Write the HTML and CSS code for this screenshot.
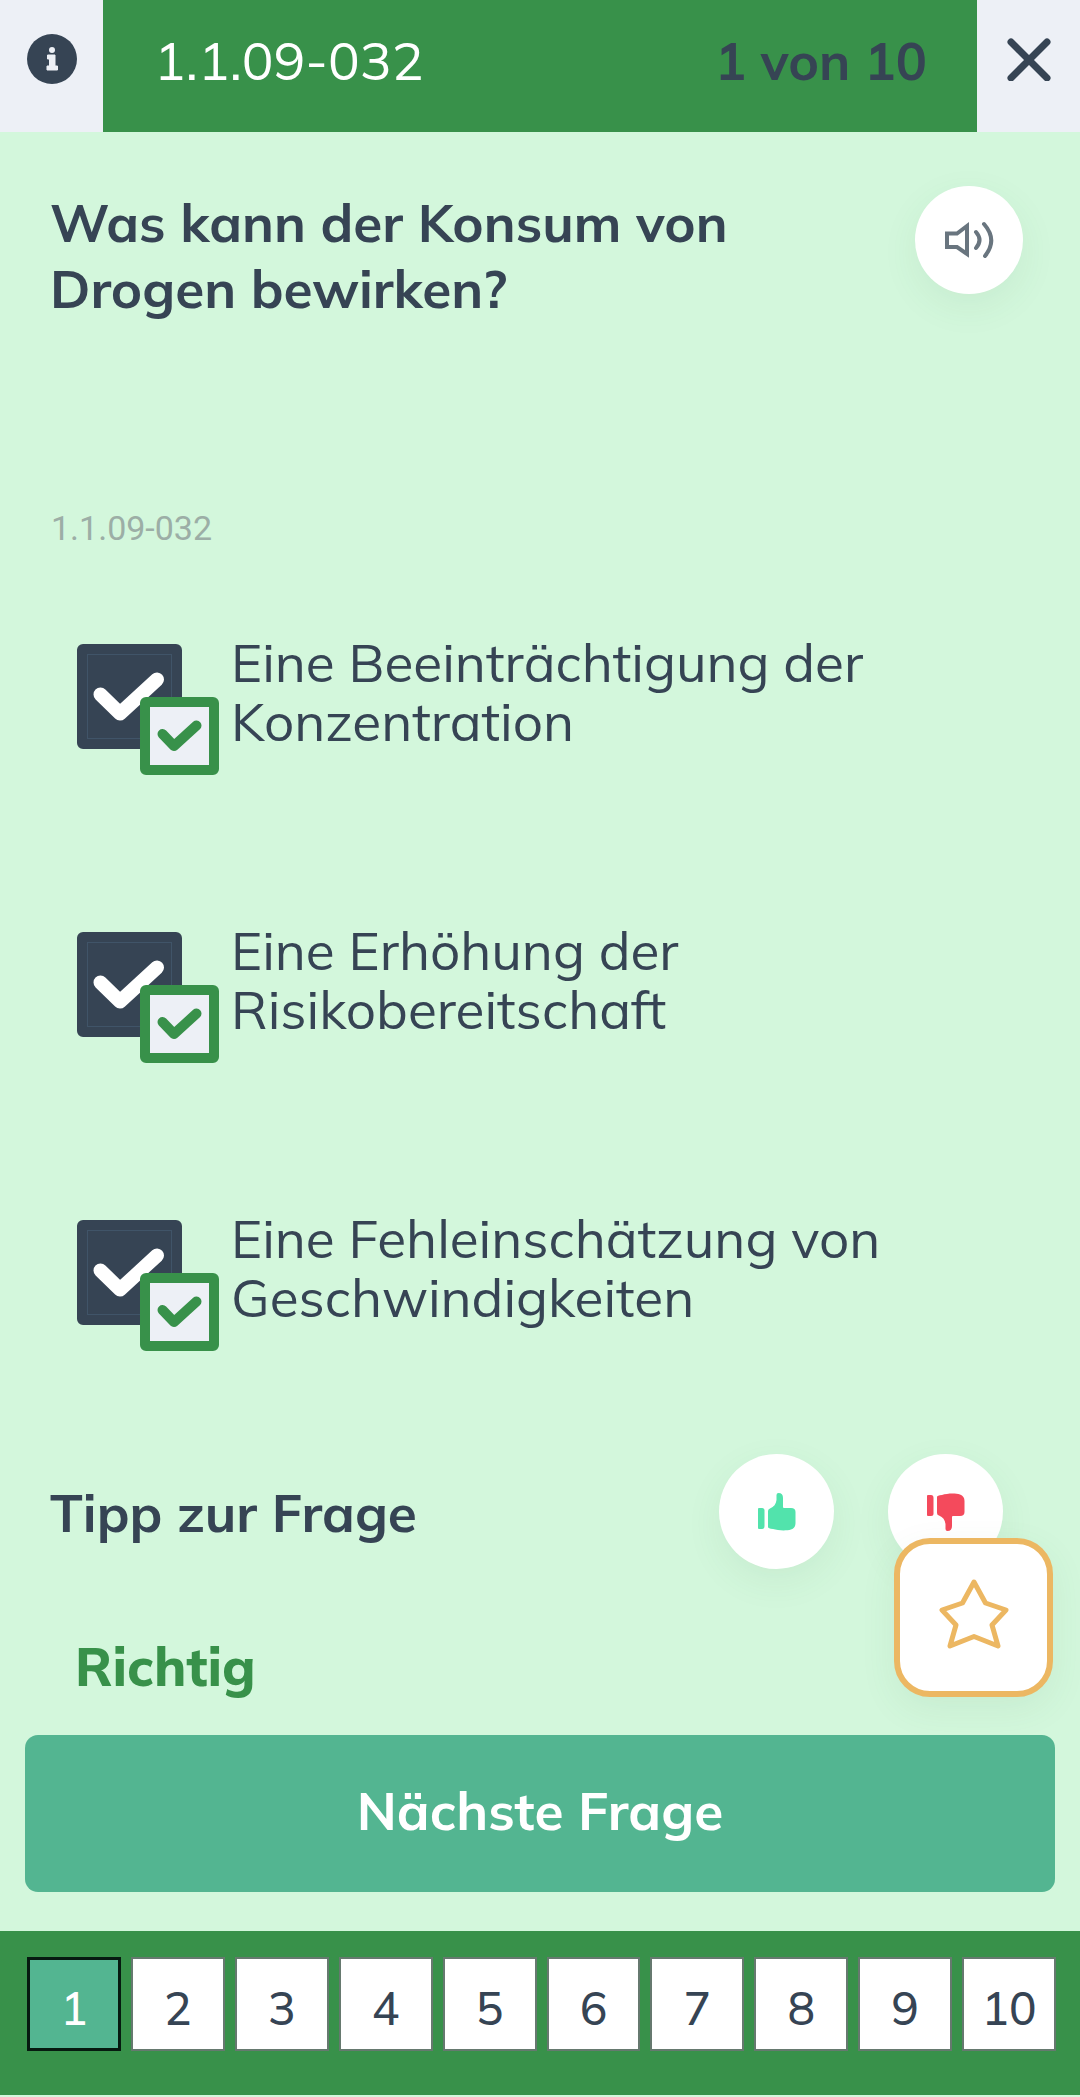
FILE: index.html
```html
<!DOCTYPE html>
<html lang="de">
<head>
<meta charset="utf-8">
<meta name="viewport" content="width=device-width, initial-scale=1">
<title>Frage 1.1.09-032</title>
<link rel="stylesheet" href="styles.css">
</head>
<body>
<svg class="sprite" aria-hidden="true">
  <symbol id="check" viewBox="0 0 72 50"><path d="M7.500 22.500 L27 41.500 L64 7.500" fill="none" stroke="currentColor" stroke-width="14" stroke-linecap="round" stroke-linejoin="round"/></symbol>
  <symbol id="check-bold" viewBox="0 0 45 32"><path d="M5.500 14 L17 26 L39.500 5.500" fill="none" stroke="currentColor" stroke-width="10" stroke-linecap="round" stroke-linejoin="round"/></symbol>
  <symbol id="thumb" viewBox="0 0 40 40">
    <path d="M2 16 H5 Q7.500 16 7.500 18.500 V34 Q7.500 37 5 37 H2 Q1 37 1 36 V17 Q1 16 2 16 Z" fill="currentColor"/>
    <path d="M11 19 Q11 17 13 16.500 C17 15 19 12 19.500 8 V3 Q19.500 1 21.500 1 Q26 1 26 6 V15 Q26 16 27 16 H34 Q38.500 16 38.500 20 V31 Q38.500 36 34 37.500 C29 39 21 38.500 16 37 Q11 36.500 11 35 Z" fill="currentColor"/>
  </symbol>
</svg>

<header class="topbar">
  <button class="topbar-button" type="button" aria-label="Information">
    <svg class="icon-info" viewBox="0 0 50 50"><circle cx="25" cy="25" r="25" fill="currentColor"/><circle cx="25" cy="16" r="3" fill="#edf0f6"/><path d="M20.500 21 H28 V32 H30.500 V36 H20 V32 H22.500 V25 H20.500 Z" fill="#edf0f6" stroke="#edf0f6" stroke-linejoin="round"/></svg>
  </button>
  <div class="topbar-title">
    <span>1.1.09-032</span>
    <strong class="topbar-progress">1 von 10</strong>
  </div>
  <button class="topbar-button" type="button" aria-label="Schließen">
    <svg class="icon-close" viewBox="0 0 44 44"><path d="M4 5 L40 41 M40 5 L4 41" stroke="currentColor" stroke-width="7" stroke-linecap="round"/></svg>
  </button>
</header>

<main>
  <section class="question">
    <h1 class="heading">Was kann der Konsum von Drogen bewirken?</h1>
    <button class="round" type="button" aria-label="Vorlesen">
      <svg class="icon-speaker" viewBox="0 0 52 40"><path d="M4 13.500 H14 L24 6 V34 L14 27 H4 Z" fill="none" stroke="currentColor" stroke-width="4"/><path d="M33 12 Q40 20 33 28 M41 4 Q55 20 42 36" fill="none" stroke="currentColor" stroke-width="4" stroke-linecap="round"/></svg>
    </button>
  </section>
  <p class="code">1.1.09-032</p>

  <div class="options">
    <label class="option">
      <span class="mark"><input class="mark-input" type="checkbox" checked><svg class="mark-check"><use href="#check"/></svg><span class="badge"><svg class="badge-check"><use href="#check-bold"/></svg></span></span>
      <span class="option-text">Eine Beeinträchtigung der Konzentration</span>
    </label>
    <label class="option">
      <span class="mark"><input class="mark-input" type="checkbox" checked><svg class="mark-check"><use href="#check"/></svg><span class="badge"><svg class="badge-check"><use href="#check-bold"/></svg></span></span>
      <span class="option-text">Eine Erhöhung der Risikobereitschaft</span>
    </label>
    <label class="option">
      <span class="mark"><input class="mark-input" type="checkbox" checked><svg class="mark-check"><use href="#check"/></svg><span class="badge"><svg class="badge-check"><use href="#check-bold"/></svg></span></span>
      <span class="option-text">Eine Fehleinschätzung von Geschwindigkeiten</span>
    </label>
  </div>

  <section class="tip">
    <h2 class="heading">Tipp zur Frage</h2>
    <div class="votes">
      <button class="round vote vote-up" type="button" aria-label="Hilfreich"><svg class="icon-thumb"><use href="#thumb"/></svg></button>
      <button class="round vote vote-down" type="button" aria-label="Nicht hilfreich"><svg class="icon-thumb"><use href="#thumb"/></svg></button>
    </div>
  </section>
  <p class="result">Richtig</p>

  <div class="actions">
    <button class="favorite" type="button" aria-label="Merken">
      <svg class="icon-star" viewBox="0 0 70 70"><path d="M35 3 L46.500 24 L67 31 L53 46 L59 67 L35 57.500 L11 67 L17 46 L3 31 L23.500 24 Z" fill="none" stroke="currentColor" stroke-width="5" stroke-linejoin="round"/></svg>
    </button>
    <button class="next" type="button">Nächste Frage</button>
  </div>
</main>

<nav class="pages" aria-label="Fragen">
  <button class="page page-current" type="button" aria-current="page">1</button>
  <button class="page" type="button">2</button>
  <button class="page" type="button">3</button>
  <button class="page" type="button">4</button>
  <button class="page" type="button">5</button>
  <button class="page" type="button">6</button>
  <button class="page" type="button">7</button>
  <button class="page" type="button">8</button>
  <button class="page" type="button">9</button>
  <button class="page" type="button">10</button>
</nav>
</body>
</html>
```
FILE: styles.css
```css
:root {
  --ink: #364454;
  --green: #38914a;
  --mint: #d3f7dc;
  --teal: #53b591;
  --pale: #edf0f6;
  --amber: #ecb762;
}

* { box-sizing: border-box; }

body {
  margin: 0;
  background: var(--mint);
  color: var(--ink);
  font-family: Mulish, "Open Sans", sans-serif;
  font-size: 53px;
}

button {
  margin: 0;
  padding: 0;
  border: 0;
  color: inherit;
  font: inherit;
}

h1, h2, p { margin: 0; }
svg { display: block; }
.sprite { display: none; }

.topbar {
  display: flex;
  height: 132px;
  background: var(--green);
}

.topbar-button {
  display: flex;
  flex: none;
  justify-content: center;
  align-items: center;
  width: 103px;
  padding-bottom: 14px;
  background: var(--pale);
}

.topbar-title {
  display: flex;
  flex: 1;
  justify-content: space-between;
  align-items: center;
  padding: 0 50px 12px 51px;
  color: #fff;
}

.topbar-progress {
  color: var(--ink);
  font-size: 52px;
  font-weight: 700;
}

.icon-info { width: 50px; height: 50px; }
.icon-close { width: 44px; height: 44px; }

.heading {
  font-size: 53px;
  font-weight: 700;
  line-height: 66px;
}

.question {
  display: flex;
  justify-content: space-between;
  align-items: flex-start;
  gap: 120px;
  min-height: 376px;
  padding: 54px 57px 0 50px;
}

.question .heading { padding-top: 3px; }

.round {
  display: flex;
  flex: none;
  justify-content: center;
  align-items: center;
  width: 108px;
  height: 108px;
  border-radius: 50%;
  background: #fff;
  color: #69757f;
  box-shadow: 0 12px 36px rgba(60, 110, 80, 0.08);
}

.icon-speaker { width: 52px; height: 40px; }

.code {
  padding-left: 51px;
  color: #9caea6;
  font-family: Roboto, sans-serif;
  font-size: 34px;
  line-height: 40px;
}

.options {
  display: grid;
  gap: 146px;
  padding: 85px 77px 0;
}

.option {
  display: flex;
  gap: 12px;
}

.mark {
  position: relative;
  flex: none;
  width: 142px;
  height: 131px;
  margin-top: 11px;
}

.mark-input {
  display: block;
  width: 105px;
  height: 105px;
  margin: 0;
  border: 10px solid var(--ink);
  border-radius: 6px;
  appearance: none;
  background: var(--ink);
  box-shadow: inset 0 0 0 1px #405468;
}

.mark-check {
  position: absolute;
  top: 28px;
  left: 16px;
  width: 72px;
  height: 50px;
  color: #fff;
}

.badge {
  display: grid;
  position: absolute;
  right: 0;
  bottom: 0;
  place-items: center;
  width: 79px;
  height: 78px;
  border: 10px solid var(--green);
  border-radius: 6px;
  background: var(--pale);
  color: var(--green);
}

.badge-check { width: 45px; height: 32px; }

.option-text {
  max-width: 690px;
  line-height: 59px;
}

.tip {
  display: flex;
  justify-content: space-between;
  align-items: center;
  padding: 103px 77px 0 50px;
}

.votes {
  display: flex;
  gap: 54px;
}

.vote { width: 115px; height: 115px; }
.vote-up { color: #52e3ac; }
.vote-down { color: #f44a5c; }
.icon-thumb { width: 40px; height: 40px; }
.vote-down .icon-thumb { transform: scaleY(-1); }

.result {
  padding: 64px 75px 36px;
  color: var(--green);
  font-weight: 800;
  line-height: 66px;
}

.actions {
  position: relative;
  padding: 0 25px 39px;
}

.favorite {
  display: grid;
  position: absolute;
  right: 27px;
  bottom: calc(100% + 38px);
  place-items: center;
  width: 159px;
  height: 159px;
  padding-bottom: 7px;
  border: 6px solid var(--amber);
  border-radius: 36px;
  background: #fff;
  color: var(--amber);
  box-shadow: 0 12px 36px rgba(60, 110, 80, 0.08);
}

.icon-star { width: 70px; height: 70px; }

.next {
  display: block;
  position: relative;
  width: 100%;
  height: 157px;
  padding-bottom: 8px;
  border-radius: 13px;
  background: var(--teal);
  color: #fff;
  font-weight: 700;
}

.pages {
  display: grid;
  grid-template-columns: repeat(10, 1fr);
  gap: 10px;
  padding: 26px 24px 44px 27px;
  background: var(--green);
}

.page {
  height: 94px;
  padding-top: 8px;
  border: 2px solid #66796f;
  background: #fff;
  font-size: 46px;
  font-weight: 500;
  line-height: 64px;
}

.page-current {
  border: 3px solid #061a10;
  background: var(--teal);
  color: #fff;
}
```
